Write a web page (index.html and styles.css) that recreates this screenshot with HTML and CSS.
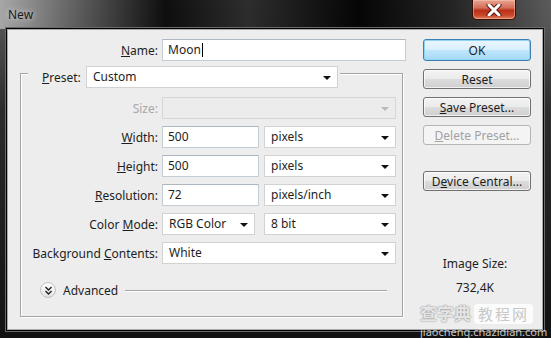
FILE: index.html
```html
<!DOCTYPE html>
<html lang="en">
<head>
    <meta charset="UTF-8">
    <title>New</title>
    <link rel="stylesheet" href="styles.css">
</head>
<body>

<div class="window">
    <!-- Title bar -->
    <div class="titlebar">
        <span class="title">New</span>
        <div class="close">
            <svg width="16" height="12" viewBox="0 0 16 12">
                <path d="M3 1 L13 11 M13 1 L3 11" stroke="#5a1a12" stroke-width="5" stroke-linecap="round"/>
                <path d="M3 1 L13 11 M13 1 L3 11" stroke="#fff" stroke-width="3" stroke-linecap="round"/>
            </svg>
        </div>
    </div>

    <div class="client">
        <div class="form">
            <div class="row name-row">
                <label class="lbl"><u>N</u>ame:</label>
                <div class="field text name-field">Moon<span class="caret"></span></div>
            </div>

            <div class="group">
                <div class="legend">
                    <label><u>P</u>reset:</label>
                    <div class="field select preset">Custom</div>
                </div>

                <div class="row first">
                    <label class="lbl off">Size:</label>
                    <div class="field select wide disabled"></div>
                </div>
                <div class="row">
                    <label class="lbl"><u>W</u>idth:</label>
                    <div class="field text num">500</div>
                    <div class="field select unit">pixels</div>
                </div>
                <div class="row">
                    <label class="lbl"><u>H</u>eight:</label>
                    <div class="field text num">500</div>
                    <div class="field select unit">pixels</div>
                </div>
                <div class="row">
                    <label class="lbl"><u>R</u>esolution:</label>
                    <div class="field text num">72</div>
                    <div class="field select unit">pixels/inch</div>
                </div>
                <div class="row">
                    <label class="lbl">Color <u>M</u>ode:</label>
                    <div class="field select mode">RGB Color</div>
                    <div class="field select unit">8 bit</div>
                </div>
                <div class="row">
                    <label class="lbl">Background <u>C</u>ontents:</label>
                    <div class="field select wide">White</div>
                </div>

                <div class="advanced">
                    <span class="adv-btn">
                        <svg width="9" height="9" viewBox="0 0 9 9">
                            <path d="M1.5 1 L4.5 4 L7.5 1 M1.5 5 L4.5 8 L7.5 5" fill="none" stroke="#222" stroke-width="1.4"/>
                        </svg>
                    </span>
                    <span>Advanced</span>
                    <span class="adv-line"></span>
                </div>
            </div>
        </div>

        <div class="side">
            <button class="btn default">OK</button>
            <button class="btn">Reset</button>
            <button class="btn"><u>S</u>ave Preset...</button>
            <button class="btn" disabled><u>D</u>elete Preset...</button>
            <button class="btn central">D<u>e</u>vice Central...</button>

            <div class="image-size">
                <div>Image Size:</div>
                <div class="size-value">732,4K</div>
            </div>
        </div>
    </div>

    <!-- watermark -->
    <div class="watermark">
        <div class="wm-top"><span class="wm-a">查字典</span><span class="wm-b">教程网</span></div>
        <div class="wm-url">jiaocheng.chazidian.com</div>
    </div>
</div>

</body>
</html>
```

FILE: styles.css
```css
* {
    margin: 0;
    padding: 0;
    box-sizing: border-box;
}

body {
    font-family: "Noto Sans", "Noto Sans CJK SC", sans-serif;
    font-size: 12px;
    color: #1e1e1e;
    background: #000;
}

.window {
    position: relative;
    width: 551px;
    height: 338px;
    overflow: hidden;
    background: linear-gradient(180deg, #5e5e5e 0, #2c2c2c 110px, #121212 100%);
}

/* Title bar */
.titlebar {
    display: flex;
    align-items: flex-start;
    height: 29px;
    background: linear-gradient(90deg, rgba(175, 175, 175, 0.9) 0, rgba(110, 110, 110, 0.7) 12%, rgba(10, 10, 10, 0.95) 30%, rgba(40, 40, 40, 0.9) 45%, rgba(5, 5, 5, 1) 65%, rgba(30, 30, 30, 0.9) 82%, rgba(90, 90, 90, 0.7) 100%);
}

.title {
    padding: 6px 0 0 8px;
    font-size: 12px;
    color: #1a1a1a;
    text-shadow: 0 0 6px rgba(255, 255, 255, 0.8);
}

.close {
    display: flex;
    align-items: center;
    justify-content: center;
    margin-left: auto;
    margin-right: 35px;
    width: 44px;
    height: 20px;
    border: 1px solid #3a0f08;
    border-top: none;
    border-radius: 0 0 5px 5px;
    background: linear-gradient(180deg, #e9a493 0, #d4705a 40%, #b8301a 55%, #c9472b 80%, #e08060 100%);
    box-shadow: inset 0 0 0 1px rgba(255, 200, 180, 0.5);
}

/* Client area */
.client {
    display: flex;
    margin: 0 8px 0 7px;
    height: 301px;
    padding-top: 9px;
    background: #ededed;
    border: 1px solid #a8a8a8;
    box-shadow: 0 0 0 1px #000, 0 0 0 2px #6a6a6a;
}

.form {
    width: 400px;
}

.row {
    display: flex;
    align-items: center;
    gap: 5px;
    margin-top: 7px;
}

.row.first {
    margin-top: 9px;
}

.name-row {
    margin-top: 0;
    gap: 4px;
}

.lbl {
    width: 137px;
    text-align: right;
    white-space: nowrap;
    margin-right: -1px;
}

.name-row .lbl {
    width: 150px;
    margin-right: 0;
}

.lbl.off {
    color: #a8a8a8;
}

.field {
    position: relative;
    height: 22px;
    line-height: 20px;
    padding-left: 5px;
    background: #fff;
    white-space: nowrap;
}

.field.text {
    border: 1px solid #c4ccd4;
    border-top-color: #aeb6bf;
}

.field.select {
    border: 1px solid #d2d2d2;
    padding-left: 6px;
}

.field.select::after {
    content: "";
    position: absolute;
    right: 6px;
    top: 9px;
    border-left: 4px solid transparent;
    border-right: 4px solid transparent;
    border-top: 4px solid #111;
}

.field.disabled {
    background: #ececec;
    border-color: #d6d6d6;
}

.field.disabled::after {
    border-top-color: #b8b8b8;
}

.name-field {
    width: 244px;
}

.caret {
    display: inline-block;
    width: 1px;
    height: 14px;
    margin-left: 1px;
    vertical-align: -3px;
    background: #000;
}

.wide {
    width: 234px;
}

.num {
    width: 97px;
}

.unit {
    width: 132px;
}

.mode {
    width: 93px;
    margin-right: 4px;
}

/* Preset group box */
.group {
    margin: 12px 0 0 12px;
    width: 383px;
    height: 244px;
    border: 1px solid #a4a4a4;
    box-shadow: inset 1px 1px 0 #fff, 1px 1px 0 #fff;
}

.legend {
    display: flex;
    align-items: center;
    width: 312px;
    margin: -8px 0 0 7px;
    padding: 0 2px 0 14px;
    background: #ededed;
}

.legend label {
    width: 44px;
}

.preset {
    width: 252px;
}

.advanced {
    display: flex;
    align-items: center;
    height: 18px;
    margin: 17px 15px 0 19px;
}

.adv-btn {
    display: flex;
    align-items: center;
    justify-content: center;
    width: 16px;
    height: 16px;
    margin-right: 7px;
    border: 1px solid #c2c2c2;
    border-radius: 50%;
    background: linear-gradient(180deg, #fff 0, #e2e2e2 100%);
}

.adv-line {
    flex: 1;
    height: 1px;
    margin-left: 7px;
    background: #a4a4a4;
    box-shadow: 0 1px 0 #fff;
}

/* Right buttons */
.side {
    display: flex;
    flex-direction: column;
    width: 108px;
    margin-left: 15px;
}

.btn {
    height: 20px;
    margin-bottom: 8px;
    font-family: inherit;
    font-size: 12px;
    color: #1e1e1e;
    border: 1px solid #707070;
    border-radius: 3px;
    background: linear-gradient(180deg, #f3f3f3 0, #ebebeb 48%, #dcdcdc 52%, #cfcfcf 100%);
    box-shadow: inset 0 0 0 1px rgba(255, 255, 255, 0.7);
}

.btn.default {
    height: 22px;
    border-color: #3c7fb1;
    background: linear-gradient(180deg, #eaf6fd 0, #d9f0fc 48%, #bee6fd 52%, #a7d9f5 100%);
    box-shadow: inset 0 0 0 1px #8fd3f5;
}

.btn:disabled {
    color: #a2a2a2;
    border-color: #b5b5b5;
    background: #f4f4f4;
    box-shadow: none;
}

.btn.central {
    margin-top: 18px;
}

.image-size {
    margin-top: 57px;
    text-align: center;
    line-height: 16px;
    padding-right: 4px;
}

.size-value {
    margin-top: 8px;
}

/* Watermark over the corner */
.watermark {
    position: absolute;
    left: 420px;
    top: 303px;
    width: 125px;
    white-space: nowrap;
    color: rgba(255, 255, 255, 0.85);
}

.wm-top {
    display: flex;
    align-items: center;
    gap: 3px;
    height: 21px;
}

.wm-a {
    font-size: 17px;
    line-height: 20px;
    font-weight: bold;
    color: rgba(255, 255, 255, 0.8);
    text-shadow: 0 0 1px #888, 0 0 2px #999;
}

.wm-b {
    padding: 0 4px;
    font-size: 15px;
    line-height: 20px;
    letter-spacing: 2px;
    color: #c8c8c8;
    background: rgba(255, 255, 255, 0.8);
    border-radius: 4px;
}

.wm-url {
    margin-top: 2px;
    font-size: 11px;
    line-height: 12px;
    color: rgba(255, 255, 255, 0.75);
}
```
